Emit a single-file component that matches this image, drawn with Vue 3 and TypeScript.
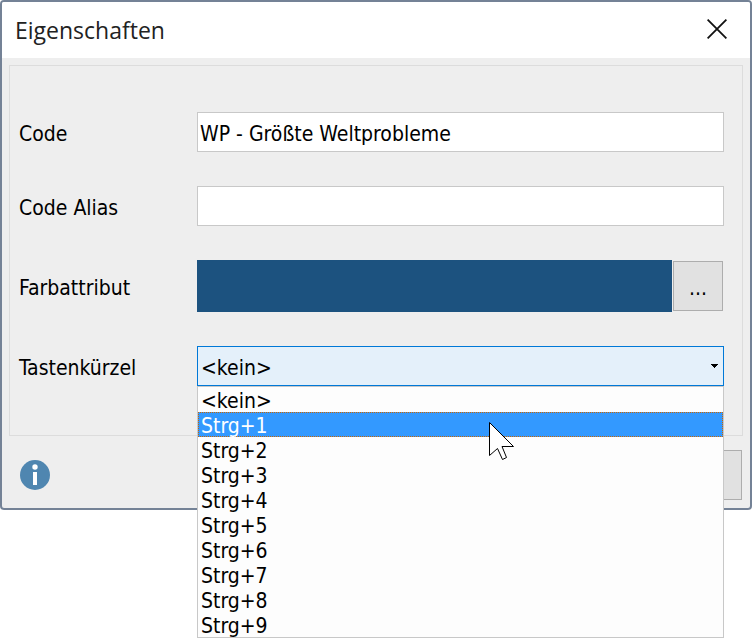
<script setup lang="ts">
import { ref } from 'vue'

const code = ref<string>('WP - Größte Weltprobleme')
const alias = ref<string>('')
const none = '<kein>'
const shortcuts: string[] = [none, ...Array.from({ length: 9 }, (_, i) => `Strg+${i + 1}`)]
const selected = ref<string>(none)
const highlighted = ref<number>(1)
</script>

<template>
  <main class="page">
    <section class="dialog" role="dialog" aria-labelledby="dialog-title">
      <header class="titlebar">
        <h1 id="dialog-title" class="title">Eigenschaften</h1>
        <button class="close" type="button">
          <svg width="20" height="20" viewBox="0 0 20 20" aria-hidden="true">
            <path d="M0.6 0.6L19.4 19.4M19.4 0.6L0.6 19.4" stroke="#111" stroke-width="1.8" fill="none" />
          </svg>
        </button>
      </header>

      <form class="body" @submit.prevent>
        <div class="panel">
          <div class="row">
            <label class="label" for="code">Code</label>
            <input id="code" v-model="code" class="field" type="text" />
          </div>
          <div class="row">
            <label class="label" for="alias">Code Alias</label>
            <input id="alias" v-model="alias" class="field" type="text" />
          </div>
          <div class="row">
            <label class="label" for="color">Farbattribut</label>
            <div class="color">
              <div class="swatch"></div>
              <button id="color" class="button pick" type="button">...</button>
            </div>
          </div>
          <div class="row">
            <label class="label" for="shortcut">Tastenkürzel</label>
            <div class="combo">
              <select id="shortcut" v-model="selected" class="select">
                <option v-for="item in shortcuts" :key="item" :value="item">{{ item }}</option>
              </select>
              <svg class="arrow" width="7" height="4" viewBox="0 0 7 4" aria-hidden="true">
                <path d="M0 0H7V1H6V2H5V3H4V4H3V3H2V2H1V1H0Z" fill="#000" />
              </svg>
              <ul class="list" role="listbox">
                <li
                  v-for="(item, index) in shortcuts"
                  :key="item"
                  class="item"
                  :class="{ active: index === highlighted }"
                  role="option"
                  :aria-selected="index === highlighted"
                  @mouseenter="highlighted = index"
                >
                  {{ item }}
                </li>
              </ul>
              <svg class="pointer" width="26" height="40" viewBox="0 0 26 40" aria-hidden="true">
                <path
                  d="M0.5 0.5V33.5L8.5 26.5L13.5 37.5L17.5 35.5L13 24.5H24.5Z"
                  fill="#fff"
                  stroke="#000"
                  stroke-width="1"
                />
              </svg>
            </div>
          </div>
        </div>

        <footer class="footer">
          <svg class="info" width="30" height="30" viewBox="0 0 30 30" aria-hidden="true">
            <circle cx="15" cy="15" r="15" fill="#4f86b0" />
            <circle cx="15" cy="7" r="2.7" fill="#fff" />
            <rect x="13" y="12" width="4" height="13" fill="#fff" />
          </svg>
          <button class="button action" type="button"></button>
        </footer>
      </form>
    </section>
  </main>
</template>

<style>
body {
  margin: 0;
  background: #fff;
}
</style>

<style scoped>
.page {
  min-height: 100vh;
}
.page,
.page * {
  box-sizing: border-box;
}
.dialog {
  border: 2px solid #748296;
  border-radius: 4px;
  background: #eee;
  color: #000;
  font: 21px/24px "DejaVu Sans Condensed", "DejaVu Sans", sans-serif;
}
.titlebar {
  display: flex;
  align-items: center;
  justify-content: space-between;
  height: 56px;
  padding: 0 23px 0 13px;
  border-radius: 2px 2px 0 0;
  background: #fff;
}
.title {
  margin: 0;
  color: #222;
  font: 23px/32px "Open Sans", sans-serif;
}
.close {
  display: flex;
  padding: 0 0 2px;
  border: 0;
  background: none;
}
.body {
  padding: 7px;
}
.panel {
  display: flex;
  flex-direction: column;
  gap: 34px;
  padding: 46px 18px 49px 9px;
  border: 1px solid #dcdcdc;
}
.row {
  display: grid;
  grid-template-columns: 178px 1fr;
  align-items: center;
}
.label {
  padding-top: 4px;
}
.field,
.select {
  width: 100%;
  height: 40px;
  margin: 0;
  border: 1px solid #c8c8c8;
  border-radius: 0;
  outline: none;
  background: #fff;
  color: #000;
  font: inherit;
}
.field {
  padding: 4px 2px 0;
}
.color {
  display: flex;
  align-items: center;
  gap: 1px;
  padding-right: 1px;
}
.swatch {
  flex: 1;
  height: 52px;
  background: #1c527f;
}
.button {
  height: 50px;
  padding: 4px 0 0;
  border: 1px solid #adadad;
  background: #e1e1e1;
  color: #000;
  font: inherit;
}
.pick {
  width: 50px;
}
.combo {
  position: relative;
}
.select {
  display: block;
  padding: 4px 3px 0;
  border-color: #0078d7;
  background: #e4f0fa;
  appearance: none;
}
.arrow {
  position: absolute;
  top: 18px;
  right: 6px;
}
.list {
  position: absolute;
  z-index: 1;
  top: 100%;
  left: 0;
  right: 0;
  margin: 0;
  padding: 0;
  border: 1px solid #c8c8c8;
  background: #fdfdfd;
  list-style: none;
}
.item {
  height: 25px;
  padding: 2px 3px 0;
  line-height: 25px;
}
.active {
  --dots-x: repeating-linear-gradient(90deg, #cc6600 0 1px, #3399ff 1px 2px);
  --dots-y: repeating-linear-gradient(#cc6600 0 1px, #3399ff 1px 2px);
  background:
    var(--dots-x) top / 100% 1px no-repeat,
    var(--dots-x) bottom / 100% 1px no-repeat,
    var(--dots-y) left / 1px 100% no-repeat,
    var(--dots-y) right / 1px 100% no-repeat,
    #3399ff;
  color: #fff;
}
.pointer {
  position: absolute;
  z-index: 2;
  top: 76px;
  left: 292px;
}
.footer {
  display: flex;
  align-items: center;
  justify-content: space-between;
  padding: 14px 1px 1px 11px;
}
.action {
  width: 130px;
}
</style>
